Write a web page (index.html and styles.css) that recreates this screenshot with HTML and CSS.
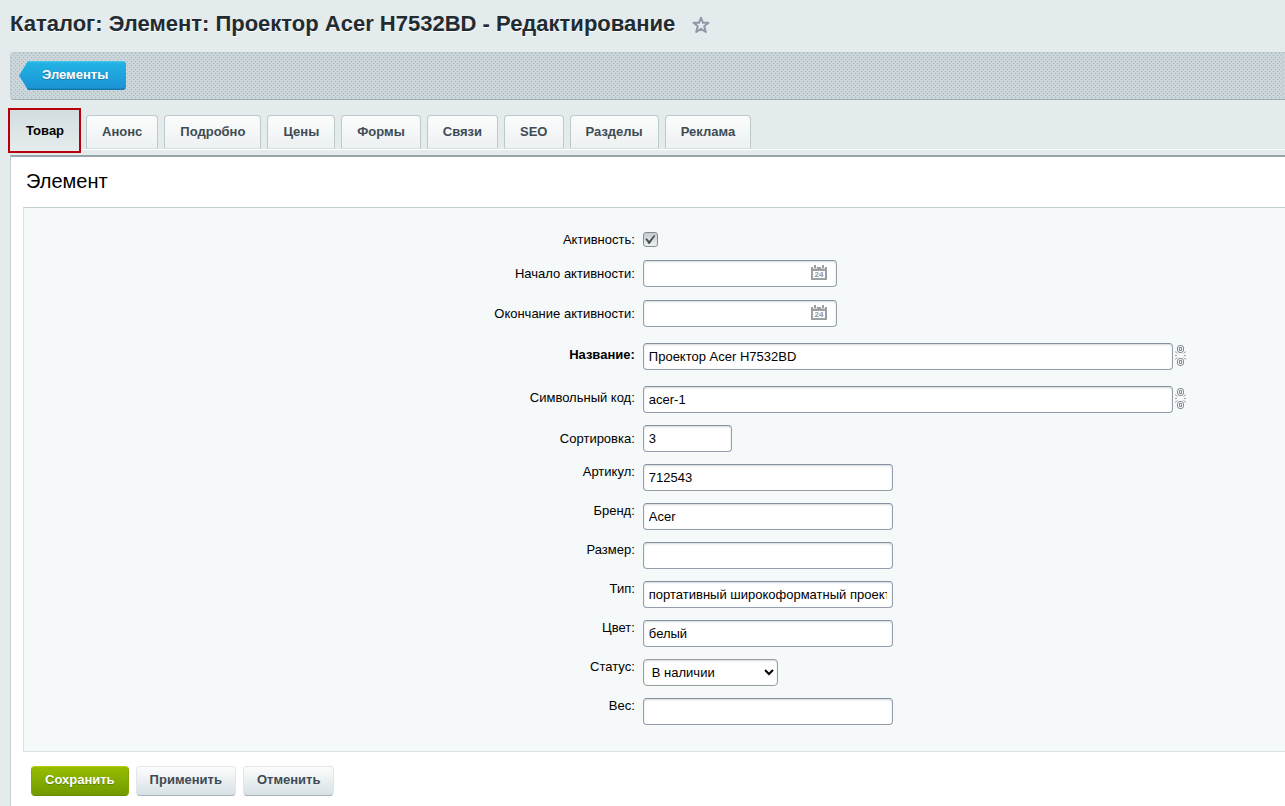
FILE: index.html
```html
<!DOCTYPE html>
<html lang="ru">
<head>
<meta charset="utf-8">
<title>Каталог: Элемент: Проектор Acer H7532BD - Редактирование</title>
<link rel="stylesheet" href="styles.css">
</head>
<body>
<svg class="sprite" aria-hidden="true">
  <symbol id="calendar" viewBox="0 0 16 15">
    <path fill="#9a9fa3" fill-rule="evenodd" d="M0 2h2v1.500h4V2h4v1.500h4V2h2v13H0zM2 6v7h12V6z"/>
    <path fill="#9a9fa3" d="M3 0h2v3H3zM11 0h2v3h-2zM6 2h4v2H6z"/>
  </symbol>
  <symbol id="unlink" viewBox="0 0 11 21">
    <g fill="none" stroke="#85898d">
      <rect x="2.500" y=".5" width="6" height="7" rx="2.500"/>
      <path d="M4.500 2.500h2v3h-2z"/>
      <rect x="2.500" y="13.500" width="6" height="7" rx="2.500"/>
      <path d="M4.500 15.500h2v3h-2z"/>
      <path d="M0 6.500l2.500 2M11 6.500l-2.500 2M0 10.500h2M9 10.500h2M0 14.500l2.500-2M11 14.500l-2.500-2" stroke="#9fa4a7"/>
    </g>
  </symbol>
</svg>

<header class="page-head">
  <h1>Каталог: Элемент: Проектор Acer H7532BD - Редактирование</h1>
  <button class="star" type="button" aria-label="Добавить в избранное">
    <svg width="18" height="18" viewBox="0 0 18 18"><path d="M9 1.800l2 5h5.500l-4.300 3.500 1.600 5.700L9 12.800 4.200 16l1.600-5.700L1.500 6.800H7z" fill="none" stroke="#8f9aa6" stroke-width="2" stroke-linejoin="round"/></svg>
  </button>
</header>

<nav class="toolbar"><a class="back" href="#list">Элементы</a></nav>

<nav class="tabs">
  <button class="tab tab-active" type="button">Товар</button>
  <button class="tab" type="button">Анонс</button>
  <button class="tab" type="button">Подробно</button>
  <button class="tab" type="button">Цены</button>
  <button class="tab" type="button">Формы</button>
  <button class="tab" type="button">Связи</button>
  <button class="tab" type="button">SEO</button>
  <button class="tab" type="button">Разделы</button>
  <button class="tab" type="button">Реклама</button>
</nav>

<form class="sheet">
  <h2>Элемент</h2>
  <div class="fields">
    <div class="row row-check">
      <label for="active">Активность:</label>
      <div class="field"><input class="check" id="active" type="checkbox" checked></div>
    </div>
    <div class="row row-date">
      <label for="from">Начало активности:</label>
      <div class="field"><div class="date"><input class="date-text" id="from" type="text"><button class="icon" type="button" aria-label="Календарь"><svg width="16" height="15"><use href="#calendar"/><text class="day" x="8" y="12">24</text></svg></button></div></div>
    </div>
    <div class="row row-date">
      <label for="to">Окончание активности:</label>
      <div class="field"><div class="date"><input class="date-text" id="to" type="text"><button class="icon" type="button" aria-label="Календарь"><svg width="16" height="15"><use href="#calendar"/><text class="day" x="8" y="12">24</text></svg></button></div></div>
    </div>
    <div class="row row-link">
      <label class="required" for="name">Название:</label>
      <div class="field"><input class="text wide" id="name" type="text" value="Проектор Acer H7532BD"><button class="icon" type="button" aria-label="Связь"><svg width="11" height="21"><use href="#unlink"/></svg></button></div>
    </div>
    <div class="row row-link">
      <label for="code">Символьный код:</label>
      <div class="field"><input class="text wide" id="code" type="text" value="acer-1"><button class="icon" type="button" aria-label="Связь"><svg width="11" height="21"><use href="#unlink"/></svg></button></div>
    </div>
    <div class="row row-sort">
      <label for="sort">Сортировка:</label>
      <div class="field"><input class="text short" id="sort" type="text" value="3"></div>
    </div>
    <div class="row">
      <label for="article">Артикул:</label>
      <div class="field"><input class="text" id="article" type="text" value="712543"></div>
    </div>
    <div class="row">
      <label for="brand">Бренд:</label>
      <div class="field"><input class="text" id="brand" type="text" value="Acer"></div>
    </div>
    <div class="row">
      <label for="size">Размер:</label>
      <div class="field"><input class="text" id="size" type="text"></div>
    </div>
    <div class="row">
      <label for="type">Тип:</label>
      <div class="field"><input class="text" id="type" type="text" value="портативный широкоформатный проектор"></div>
    </div>
    <div class="row">
      <label for="color">Цвет:</label>
      <div class="field"><input class="text" id="color" type="text" value="белый"></div>
    </div>
    <div class="row">
      <label for="status">Статус:</label>
      <div class="field"><select class="select" id="status"><option>В наличии</option></select></div>
    </div>
    <div class="row">
      <label for="weight">Вес:</label>
      <div class="field"><input class="text" id="weight" type="text"></div>
    </div>
  </div>
  <div class="actions">
    <button class="btn btn-save" type="button">Сохранить</button>
    <button class="btn" type="button">Применить</button>
    <button class="btn" type="button">Отменить</button>
  </div>
</form>
</body>
</html>
```
FILE: styles.css
```css
* { box-sizing: border-box; }

body {
  margin: 0;
  padding: 8px 0 0 10px;
  background: #e3ebed;
  color: #000;
  font: 13px/15px "Liberation Sans", Arial, sans-serif;
  overflow-x: hidden;
}

button, input, select { font: inherit; color: inherit; margin: 0; }
button { cursor: pointer; }

.sprite { position: absolute; width: 0; height: 0; }

.page-head { display: flex; align-items: center; gap: 17px; height: 32px; }

h1 {
  margin: 0;
  color: #222b30;
  font-size: 22px;
  line-height: 32px;
  white-space: nowrap;
  text-shadow: 0 1px 0 #fff;
}

.star, .icon { display: flex; padding: 0; border: 0; background: none; }
.star { padding-top: 2px; }

.day { font-size: 8px; font-weight: bold; text-anchor: middle; fill: #8f9498; }

.toolbar {
  display: flex;
  margin-top: 12px;
  padding: 9px;
  height: 48px;
  border: solid #bfcacd;
  border-width: 1px 0 0 1px;
  border-bottom: 1px solid #9dabae;
  border-radius: 4px 0 0 4px;
  background-color: #cbd6da;
  background-image:
    conic-gradient(from 270deg at 1px 1px, #a9b6ba 90deg, transparent 0),
    conic-gradient(from 270deg at 1px 1px, #a9b6ba 90deg, transparent 0);
  background-position: 0 0, 2px 2px;
  background-size: 4px 4px;
}

.back {
  display: block;
  height: 29px;
  padding: 0 18px 0 23px;
  margin: -1px;
  border-radius: 3px;
  background: linear-gradient(#4cc8ee 0, #22b2e2 2px, #1b94d6 27px, #1579ad 28px);
  clip-path: polygon(0 50%, 9px 0, 100% 0, 100% 100%, 9px 100%);
  color: #fff;
  font-size: 13px;
  font-weight: bold;
  line-height: 28px;
  text-decoration: none;
  text-shadow: 0 1px 1px #1679ad;
}

.tabs {
  display: flex;
  align-items: flex-end;
  gap: 6px;
  height: 50px;
  border-bottom: 1px solid #fff;
}

.tab {
  height: 34px;
  padding: 0 15px 1px;
  border: 1px solid #bdc9cb;
  border-bottom-color: #d5dfe1;
  border-radius: 4px 4px 0 0;
  background: linear-gradient(#fbfcfc, #edf1f2);
  color: #3f4b54;
  font-weight: bold;
  white-space: nowrap;
}

.tab-active {
  height: 45px;
  margin: 0 -1px -4px -2px;
  padding: 0 15px 0 16px;
  border: 2px solid #b80009;
  border-radius: 0;
  background: linear-gradient(#d3dddf, #e5ecee);
  color: #000;
}

.sheet {
  margin-top: 5px;
  padding-left: 12px;
  border-top: 2px solid #9aa5a9;
  border-left: 1px solid #c2cfd2;
  background: #fff;
}

h2 {
  margin: 0;
  padding: 9px 3px 11px;
  font-size: 20px;
  font-weight: normal;
  line-height: 30px;
}

.fields {
  padding: 18px 0 19px;
  border: solid #d6e2e6;
  border-width: 1px 0 1px 1px;
  border-top-color: #c2cfd1;
  background: #f5f9f9;
}

.row {
  display: grid;
  grid-template-columns: 39fr 41fr;
  column-gap: 8px;
  padding: 5px 0 7px;
}

.row label { text-align: right; line-height: 15px; }
.row .required { font-weight: bold; }
.row-check { padding: 6px 0 7px; }
.row-date { padding: 6px 0 7px; }
.row-link { padding: 9px 0 7px; }
.row-date label, .row-sort label { line-height: 27px; }
.row-link label { line-height: 23px; }

.field { display: flex; gap: 2px; min-width: 0; }
.row-link .icon { margin-top: 2px; height: 21px; }

.text, .date, .select {
  width: 250px;
  height: 27px;
  padding: 0 5px;
  border: 1px solid #959eae;
  border-top-color: #848f9f;
  border-radius: 4px;
  background: #fff;
  box-shadow: inset 0 1px 2px #d3dadd;
}

.wide { width: 530px; }
.short { width: 89px; }
.select { width: 135px; padding: 0 4px; border-color: #9a9d9e; }

.date { display: flex; align-items: center; width: 194px; padding: 0 9px 2px 5px; }
.date-text { flex: 1; min-width: 0; border: 0; padding: 0; background: none; outline: 0; }

.check {
  appearance: none;
  display: grid;
  place-items: center;
  width: 15px;
  height: 15px;
  border: 1px solid #868d92;
  border-radius: 3px;
  background: linear-gradient(#c6cbce, #eef0f1);
}

.check::before {
  content: "";
  width: 10px;
  height: 9px;
  background: #454b50;
  clip-path: polygon(0 45%, 15% 35%, 38% 68%, 88% 0, 100% 8%, 42% 100%, 34% 100%);
}

.actions { display: flex; gap: 7px; padding: 14px 7px 10px; }

.btn {
  height: 30px;
  padding: 0 13px 3px;
  border: 1px solid #e2e6e8;
  border-bottom-color: #a9b4b9;
  border-radius: 4px;
  background: linear-gradient(#fcfdfd, #d7e1e5);
  color: #3f4b54;
  font-weight: bold;
}

.btn-save {
  margin-left: 1px;
  border-color: #b5cc16 #82a800 #648a00;
  background: linear-gradient(#97bd00, #719a00);
  color: #fff;
  text-shadow: 0 1px 1px #5d7e00;
}
```
